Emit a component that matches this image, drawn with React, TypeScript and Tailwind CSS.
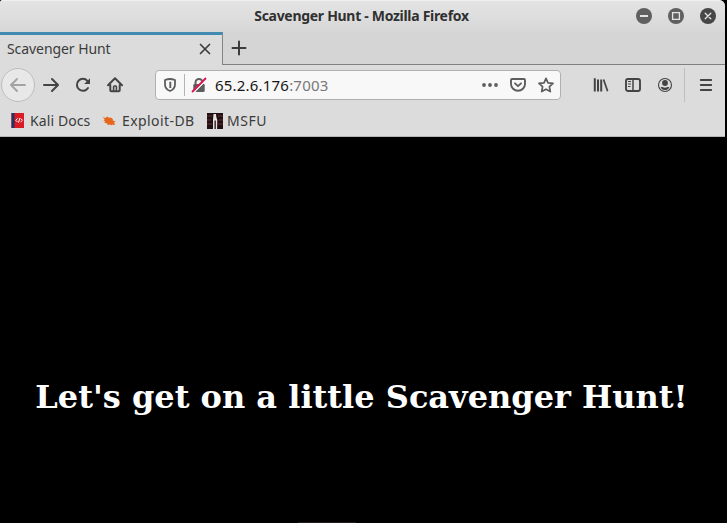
import type { ReactNode } from "react";

function Icon({ size = 16, className = "", children }: { size?: number; className?: string; children: ReactNode }) {
  return (
    <svg
      width={size}
      height={size}
      viewBox="0 0 16 16"
      fill="none"
      stroke="currentColor"
      strokeWidth={2}
      strokeLinecap="round"
      strokeLinejoin="round"
      className={`block shrink-0 ${className}`}
    >
      {children}
    </svg>
  );
}

function TitleBar() {
  return (
    <header className="relative flex h-8 items-center justify-end border-t border-[#efefef] bg-linear-to-b from-[#e4e4e4] to-[#d7d7d7] pr-[9px] pb-px">
      <h1 className="absolute inset-x-0 top-[5px] pr-[2px] text-center text-[14px] leading-5 font-bold tracking-[-0.3px] text-[#303030]">
        Scavenger Hunt - Mozilla Firefox
      </h1>
      <div className="flex gap-4 text-[#e4e4e4]">
        <Icon>
          <circle cx="8" cy="8" r="8" fill="#606060" stroke="none" />
          <path d="M4 8h8" strokeLinecap="butt" />
        </Icon>
        <Icon>
          <circle cx="8" cy="8" r="8" fill="#606060" stroke="none" />
          <path d="M4.6 4.6h6.8v6.8H4.6z" strokeWidth="1.3" strokeLinejoin="miter" />
        </Icon>
        <Icon>
          <circle cx="8" cy="8" r="8" fill="#464646" stroke="none" />
          <path d="M5.2 5.2l5.6 5.6M10.8 5.2l-5.6 5.6" strokeWidth="1.3" />
        </Icon>
      </div>
    </header>
  );
}

function TabStrip() {
  return (
    <div className="flex h-[33px] bg-[#d5d5d5] text-[#3b3b3b]">
      <div className="flex w-[223px] items-center justify-between border-t-[3px] border-r border-t-[#428bb0] border-r-[#858585] bg-[#dcdcdc] pr-[11px] pb-[2px] pl-[7px]">
        <span className="text-[14px] leading-5 tracking-[-0.07px]">Scavenger Hunt</span>
        <Icon size={12}>
          <path d="M2 2l12 12M14 2L2 14" strokeWidth="2.2" />
        </Icon>
      </div>
      <div className="flex flex-1 items-center border-b border-[#808080] pl-2">
        <Icon>
          <path d="M8 1.5v13M1.5 8h13" />
        </Icon>
      </div>
    </div>
  );
}

function AddressBar() {
  return (
    <div className="ml-8 flex h-[30px] w-[406px] items-center rounded-[4px] border border-[#b0b0b0] bg-[#f8f8f8] px-[6px] text-[#5d5d5d]">
      <Icon>
        <path d="M8 2c1.6 0 3.4.4 5 1v4.3c0 3.2-2 5.6-5 6.7-3-1.1-5-3.500-5-6.700V3c1.600-.6 3.400-1 5-1z" strokeWidth="1.8" />
        <path d="M8.300 4.800v6.200" strokeWidth="1.900" strokeLinecap="butt" />
      </Icon>
      <div className="mx-[6px] h-[22px] w-px bg-[#b4b4b4]" />
      <Icon>
        <path d="M4.500 8V5.500a3.500 3.500 0 0 1 7 0V8" />
        <rect x="2.300" y="7" width="11.400" height="8" rx="1.300" fill="currentColor" stroke="none" />
        <path d="M2.600 15.600L15.600 2.600" stroke="#f8f8f8" strokeWidth="1.500" />
        <path d="M1.500 14.500L14.500 1.500" stroke="#dc1750" strokeWidth="1.800" />
      </Icon>
      <span className="ml-2 flex-1 text-[15px] leading-5 tracking-[0.2px] whitespace-nowrap text-[#777]">
        <span className="text-[#161616]">65.2.6.176</span>:7003
      </span>
      <div className="flex gap-3">
        <Icon>
          <g fill="currentColor" stroke="none">
            <circle cx="2" cy="8" r="1.900" />
            <circle cx="8" cy="8" r="1.900" />
            <circle cx="14" cy="8" r="1.900" />
          </g>
        </Icon>
        <Icon>
          <path d="M2 2h12a1 1 0 0 1 1 1v4a7 6.700 0 0 1-14 0V3a1 1 0 0 1 1-1z" strokeWidth="1.900" />
          <path d="M5 6.300l3 2.900 3-2.900" strokeWidth="1.800" />
        </Icon>
        <Icon>
          <path d="M8 1.300l2 4.500 5 .6-3.600 3.300.9 4.900L8 12.200l-4.300 2.400.9-4.900L1 6.400l5-.6z" strokeWidth="1.700" />
        </Icon>
      </div>
    </div>
  );
}

function NavBar() {
  return (
    <nav className="flex h-10 items-center pl-px text-[#444]">
      <div className="flex size-[34px] items-center justify-center rounded-full border border-[#bdbdbd] bg-[#e8e8e8] text-[#a3a3a3]">
        <Icon>
          <path d="M15 8H1.500M7 2L1 8l6 6" strokeWidth="1.900" />
        </Icon>
      </div>
      <div className="flex gap-4 pl-2">
        <Icon>
          <path d="M1 8h13.500M9 2l6 6-6 6" />
        </Icon>
        <Icon>
          <path d="M13 11a6 6 0 1 1-.6-7.200" />
          <path d="M15 1.200v5.300a.5.5 0 0 1-.5.500H9.200z" fill="currentColor" stroke="none" />
        </Icon>
        <Icon>
          <path d="M1 8.200L8 1.300l7 6.900M3.300 8v5.200q0 1 1 1h7.400q1 0 1-1V8" />
          <path d="M6.600 13.500V9.700q0-.7.700-.7h1.400q.7 0 .7.700v3.800" strokeWidth="1.600" />
        </Icon>
      </div>
      <AddressBar />
      <div className="flex gap-4 pl-8">
        <Icon>
          <path d="M1.800 1.200v13.300M5 2.500v12M8.200 2.500v12" strokeLinecap="butt" strokeWidth="2" />
          <path d="M10.600 2.500l4 11.800" strokeLinecap="butt" strokeWidth="1.700" />
        </Icon>
        <Icon>
          <rect x="1" y="2" width="14" height="12" rx="2" strokeWidth="1.900" />
          <path d="M8 2v12" strokeWidth="1.500" />
          <path d="M3 4.500h3M3 7h3M3 9.500h2.500" strokeWidth="1" strokeLinecap="butt" />
        </Icon>
        <Icon>
          <circle cx="8" cy="8" r="6.500" strokeWidth="1.100" />
          <circle cx="8" cy="6" r="2.900" fill="currentColor" stroke="none" />
          <path d="M3.700 10.200c1.400-.5 2.300.5 4.300.5s2.900-1 4.300-.5c-.6 1.600-2.300 2.900-4.300 2.900s-3.700-1.300-4.300-2.900z" fill="currentColor" stroke="none" />
        </Icon>
      </div>
      <div className="mr-[13px] ml-[11px] h-[34px] w-px bg-[#bfbfbf]" />
      <Icon>
        <path d="M2.800 3h10.400M2.800 8h10.400M2.800 13h10.400" strokeWidth="1.900" />
      </Icon>
    </nav>
  );
}

function BookmarkBar() {
  return (
    <div className="flex h-8 items-center border-b border-[#b5b5b5] pl-[10px] text-[14px] leading-5 text-[#3b3b3b]">
      <Icon>
        <rect x="1.500" y="0" width="12.500" height="15" fill="#db1b24" stroke="none" />
        <rect x="1.500" y="0" width="3" height="15" fill="#29335f" stroke="none" />
        <path d="M7.300 5.700L5.800 7.300l1.500 1.500M10.900 5.700l1.500 1.600-1.500 1.500M8.600 9.200l1.200-3.900" stroke="#fff" strokeWidth="1" />
      </Icon>
      <span className="ml-1 w-[60px] tracking-[0.1px] whitespace-nowrap">Kali Docs</span>
      <Icon className="ml-[11px]">
        <path d="M1.500 4l3 .9L6 3.600l1.600 1 2.700.2 1.600 1.500-.1 1.200 3 1-1.700.8 1 2.700-2.600-.6-.3 1.100-2.300-.9-2.100.3-.9-1.700-2.600-.5 1-1.500-1.800-.8L3.700 6.300z" fill="#e8651c" stroke="none" />
      </Icon>
      <span className="ml-[5px] w-[73px] tracking-[0.42px] whitespace-nowrap">Exploit-DB</span>
      <Icon className="ml-3">
        <path d="M0 0h16v16H0z" fill="#211013" stroke="none" />
        <path d="M0 3h5M0 7h4M0 11h5M11 3h5M12 7h4M11 11h5" stroke="#603033" strokeWidth="1" strokeLinecap="butt" />
        <path d="M6.500 1H9l.3 3 1 3-.2 9H8.800V7.500h-1.300V16H6V7z" fill="#e7e4df" stroke="none" />
      </Icon>
      <span className="ml-1 tracking-[0.5px]">MSFU</span>
    </div>
  );
}

export default function App() {
  return (
    <div className="h-[523px] w-[727px] overflow-hidden bg-black pr-[2px] font-['Noto_Sans','Open_Sans',sans-serif]">
      <div className="overflow-hidden rounded-tl-[3px] rounded-tr-[6px] bg-[#dcdcdc]">
        <TitleBar />
        <TabStrip />
        <NavBar />
        <BookmarkBar />
      </div>
      <main className="flex h-[385px] flex-col items-center bg-black pt-[241px] pr-[2px]">
        <h2 className="font-['DejaVu_Serif',serif] text-[32px] leading-[38px] font-bold whitespace-nowrap text-white">
          Let's get on a little Scavenger Hunt!
        </h2>
      </main>
      <div className="ml-[298px] h-px w-[58px] bg-[#241a1b]" />
    </div>
  );
}
